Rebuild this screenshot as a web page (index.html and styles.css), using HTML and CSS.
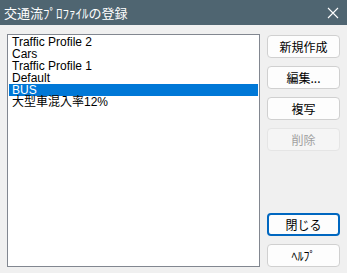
FILE: index.html
```html
<!DOCTYPE html>
<html lang="ja">

<head>
    <meta charset="UTF-8">
<title>交通流ﾌﾟﾛﾌｧｲﾙの登録</title>
<link rel="stylesheet" href="styles.css">
</head>

<body>

    <div class="dialog">
        <header class="titlebar">
            <span class="title">交通流ﾌﾟﾛﾌｧｲﾙの登録</span>
            <button class="luk" aria-label="閉じる">
                <svg width="12" height="12" viewBox="0 0 12 12">
                    <path d="M1 1 L11 11 M11 1 L1 11" stroke="#ffffff" stroke-width="1.1" fill="none" />
                </svg>
            </button>
        </header>

        <section class="indhold">
            <ul class="liste">
                <li>Traffic Profile 2</li>
                <li>Cars</li>
                <li>Traffic Profile 1</li>
                <li>Default</li>
                <li class="valgt">BUS</li>
                <li>大型車混入率12%</li>
            </ul>

            <div class="knapper">
                <div class="gruppe">
                    <button class="knap">新規作成</button>
                    <button class="knap">編集...</button>
                    <button class="knap">複写</button>
                    <button class="knap" disabled>削除</button>
                </div>
                <div class="gruppe">
                    <button class="knap standard">閉じる</button>
                    <button class="knap">ﾍﾙﾌﾟ</button>
                </div>
            </div>
        </section>
    </div>

</body>

</html>
```

FILE: styles.css
```css
body {
    margin: 0;
    background-color: #F0F0F0;
    font-family: "Liberation Sans", "Noto Sans CJK JP", sans-serif;
}

.dialog {
    width: 347px;
    height: 273px;
    display: flex;
    flex-direction: column;
}

.titlebar {
    height: 25px;
    background-color: #4F6571;
    color: #FFFFFF;
    display: flex;
    align-items: center;
    justify-content: space-between;
    padding: 0 8px 0 4px;
}

.title {
    font-family: "Noto Sans CJK JP", sans-serif;
    font-size: 13px;
    line-height: 13px;
}

.luk {
    background: none;
    border: none;
    padding: 0;
    width: 12px;
    height: 12px;
    display: flex;
}

.indhold {
    flex: 1;
    display: flex;
    justify-content: space-between;
    padding: 9px 7px 6px 7px;
}

.liste {
    list-style: none;
    margin: 0;
    padding: 1px 1px;
    width: 249px;
    background-color: #FFFFFF;
    border: 1px solid #828790;
}

.liste li {
    font-size: 12px;
    line-height: 12px;
    height: 12px;
    padding-left: 3px;
    color: #000000;
    white-space: nowrap;
}

.liste .valgt {
    background-color: #0078D7;
    color: #FFFFFF;
}

.knapper {
    width: 73px;
    display: flex;
    flex-direction: column;
    justify-content: space-between;
    padding-top: 1px;
}

.gruppe {
    display: flex;
    flex-direction: column;
    gap: 8px;
}

.knap {
    height: 23px;
    background-color: #FDFDFD;
    border: 1px solid #D0D0D0;
    border-radius: 4px;
    font-family: "Noto Sans CJK JP", sans-serif;
    font-size: 12px;
    line-height: 12px;
    color: #000000;
    padding: 0;
}

.knap:disabled {
    background-color: #F5F5F5;
    border-color: #E5E5E5;
    color: #A0A0A0;
}

.standard {
    border: 2px solid #0067C0;
}
```
